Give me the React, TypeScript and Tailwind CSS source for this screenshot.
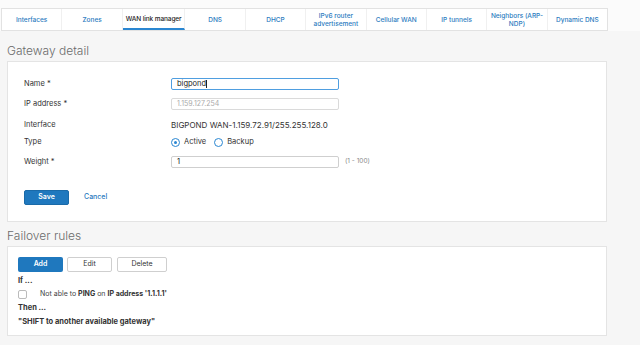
import React from 'react';

const tabs = [
  'Interfaces',
  'Zones',
  'WAN link manager',
  'DNS',
  'DHCP',
  'IPv6 router advertisement',
  'Cellular WAN',
  'IP tunnels',
  'Neighbors (ARP-NDP)',
  'Dynamic DNS',
];

function Row({ label, children }: { label: string; children: React.ReactNode }) {
  return (
    <div className="flex items-center h-[14px]">
      <div className="w-[147px] text-[7.5px] text-[#333]">{label}</div>
      <div className="flex items-center">{children}</div>
    </div>
  );
}

export default function App() {
  return (
    <div className="w-[640px] h-[345px] overflow-hidden bg-[#f6f6f6] font-['Inter',sans-serif]">
      {/* Tabs */}
      <div className="pt-[8px] bg-[#fbfbfb] pl-[1px]">
        <div className="flex w-[607px] h-[23px] bg-white border border-[#e2e2e2]">
          {tabs.map((t, i) => (
            <div
              key={t}
              className={
                'flex-1 flex items-center justify-center text-center px-[3px] text-[6.5px] leading-[8px] ' +
                (i < tabs.length - 1 ? 'border-r border-[#f0f0f0] ' : '') +
                (i === 2
                  ? 'text-[#222] font-medium whitespace-nowrap tracking-[-0.1px] border-b-2 border-b-[#2a86d1]'
                  : 'text-[#2b7bc0] font-medium')
              }
            >
              {t}
            </div>
          ))}
        </div>
      </div>

      {/* Gateway detail */}
      <div className="px-[7px] w-[614px]">
        <h2 className="mt-[11px] h-[18px] text-[12px] font-light text-[#6b6b6b] leading-[18px]">Gateway detail</h2>
        <div className="mt-[1px] h-[161px] bg-white border border-[#e4e4e4] pl-[16px] pt-[15px]">
          <div className="flex flex-col gap-[6px]">
            <Row label="Name *">
              <div className="w-[168px] h-[12px] border border-[#4f9ee0] rounded-[2px] flex items-center pl-[5px] text-[7.5px] text-[#222]">
                bigpond<span className="w-px h-[8px] bg-[#222]" />
              </div>
            </Row>
            <Row label="IP address *">
              <div className="w-[168px] h-[12px] border border-[#dadada] rounded-[2px] flex items-center pl-[5px] text-[7px] text-[#aaa]">
                1.159.127.254
              </div>
            </Row>
            <div className="mt-[1px]">
              <Row label="Interface">
                <span className="text-[8px] text-[#333]">BIGPOND WAN-1.159.72.91/255.255.128.0</span>
              </Row>
            </div>
            <div className="-mt-[3px]">
              <Row label="Type">
                <span className="w-[9px] h-[9px] rounded-full border-[1.5px] border-[#2a86d1] flex items-center justify-center">
                  <span className="w-[3px] h-[3px] rounded-full bg-[#2a86d1]" />
                </span>
                <span className="ml-[4px] text-[7.5px] text-[#333]">Active</span>
                <span className="ml-[8px] w-[9px] h-[9px] rounded-full border-[1.5px] border-[#2a86d1]" />
                <span className="ml-[4px] text-[7.5px] text-[#333]">Backup</span>
              </Row>
            </div>
            <Row label="Weight *">
              <div className="w-[168px] h-[12px] border border-[#cfcfcf] rounded-[2px] flex items-center pl-[5px] text-[7.5px] text-[#222]">
                1
              </div>
              <span className="ml-[6px] text-[6.5px] text-[#888]">(1 - 100)</span>
            </Row>
          </div>
          <div className="mt-[21px] flex items-center">
            <button className="w-[45px] h-[15px] bg-[#1f78be] border border-[#1a6aa8] rounded-[2px] text-white text-[7px] font-semibold">
              Save
            </button>
            <span className="ml-[15px] text-[7px] text-[#2b7bc0] font-medium">Cancel</span>
          </div>
        </div>

        {/* Failover rules */}
        <h2 className="mt-[5px] h-[18px] text-[12px] font-light text-[#6b6b6b] leading-[18px]">Failover rules</h2>
        <div className="mt-[1px] h-[90px] bg-white border border-[#e4e4e4] pl-[10px] pt-[10px]">
          <div className="flex gap-[4px]">
            <button className="w-[45px] h-[15px] bg-[#1f78be] rounded-[2px] text-white text-[7px] font-semibold">Add</button>
            <button className="w-[45px] h-[15px] bg-white border border-[#cfcfcf] rounded-[2px] text-[#333] text-[7px]">Edit</button>
            <button className="ml-[1px] w-[50px] h-[15px] bg-white border border-[#cfcfcf] rounded-[2px] text-[#333] text-[7px]">Delete</button>
          </div>
          <div className="mt-[4px] text-[7.5px] font-bold text-[#333] leading-[10px]">If ...</div>
          <div className="mt-[3px] flex items-center h-[10px]">
            <span className="w-[9px] h-[9px] border border-[#bbb] rounded-[2px] bg-white" />
            <span className="ml-[13px] text-[7px] text-[#444]">
              Not able to <b className="text-[#333]">PING</b> on <b className="text-[#333]">IP address '1.1.1.1'</b>
            </span>
          </div>
          <div className="mt-[4px] text-[7.5px] font-bold text-[#333] leading-[10px]">Then ...</div>
          <div className="mt-[4px] text-[7.5px] font-bold text-[#333] leading-[10px]">"SHIFT to another available gateway"</div>
        </div>
      </div>
    </div>
  );
}
